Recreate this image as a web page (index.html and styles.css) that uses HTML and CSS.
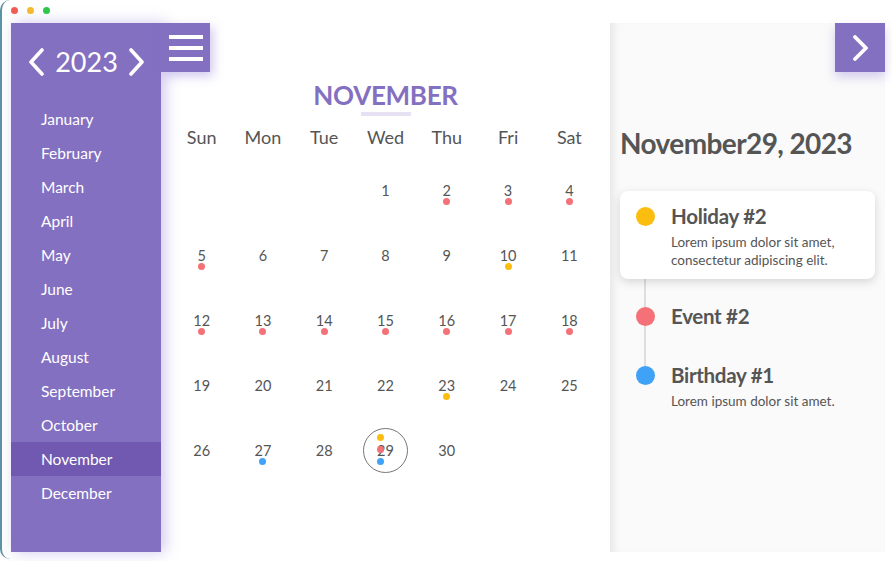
FILE: index.html
```html
<!DOCTYPE html>
<html lang="en">
<head>
<meta charset="utf-8">
<title>Calendar</title>
<link rel="stylesheet" href="styles.css">
</head>
<body>
<div class="window">
  <div class="titlebar">
    <span class="light red"></span><span class="light yellow"></span><span class="light green"></span>
  </div>
  <div class="app">
    <aside class="sidebar">
      <div class="year">
        <svg class="chev" width="18" height="28" viewBox="0 0 18 28"><polyline points="15,2 4,14 15,26" fill="none" stroke="#fff" stroke-width="3.6" stroke-linecap="round" stroke-linejoin="round"/></svg>
        <span class="year-num">2023</span>
        <svg class="chev" width="18" height="28" viewBox="0 0 18 28"><polyline points="3,2 14,14 3,26" fill="none" stroke="#fff" stroke-width="3.6" stroke-linecap="round" stroke-linejoin="round"/></svg>
      </div>
      <ul class="months">
        <li>January</li>
        <li>February</li>
        <li>March</li>
        <li>April</li>
        <li>May</li>
        <li>June</li>
        <li>July</li>
        <li>August</li>
        <li>September</li>
        <li>October</li>
        <li class="active">November</li>
        <li>December</li>
      </ul>
    </aside>

    <main class="calendar">
      <button class="menu-btn" aria-label="menu"><span></span><span></span><span></span></button>
      <h1 class="month-title">NOVEMBER</h1>
      <div class="title-bar"></div>
      <div class="grid heads">
        <div>Sun</div><div>Mon</div><div>Tue</div><div>Wed</div><div>Thu</div><div>Fri</div><div>Sat</div>
      </div>
      <div class="grid days">
        <div class="day"></div><div class="day"></div><div class="day"></div>
        <div class="day"><span class="n">1</span></div>
        <div class="day"><span class="n">2</span><i class="dot r"></i></div>
        <div class="day"><span class="n">3</span><i class="dot r"></i></div>
        <div class="day"><span class="n">4</span><i class="dot r"></i></div>

        <div class="day"><span class="n">5</span><i class="dot r"></i></div>
        <div class="day"><span class="n">6</span></div>
        <div class="day"><span class="n">7</span></div>
        <div class="day"><span class="n">8</span></div>
        <div class="day"><span class="n">9</span></div>
        <div class="day"><span class="n">10</span><i class="dot y"></i></div>
        <div class="day"><span class="n">11</span></div>

        <div class="day"><span class="n">12</span><i class="dot r"></i></div>
        <div class="day"><span class="n">13</span><i class="dot r"></i></div>
        <div class="day"><span class="n">14</span><i class="dot r"></i></div>
        <div class="day"><span class="n">15</span><i class="dot r"></i></div>
        <div class="day"><span class="n">16</span><i class="dot r"></i></div>
        <div class="day"><span class="n">17</span><i class="dot r"></i></div>
        <div class="day"><span class="n">18</span><i class="dot r"></i></div>

        <div class="day"><span class="n">19</span></div>
        <div class="day"><span class="n">20</span></div>
        <div class="day"><span class="n">21</span></div>
        <div class="day"><span class="n">22</span></div>
        <div class="day"><span class="n">23</span><i class="dot y"></i></div>
        <div class="day"><span class="n">24</span></div>
        <div class="day"><span class="n">25</span></div>

        <div class="day"><span class="n">26</span></div>
        <div class="day"><span class="n">27</span><i class="dot b"></i></div>
        <div class="day"><span class="n">28</span></div>
        <div class="day selected"><span class="n">29</span>
          <span class="ring"><i class="dot y"></i><i class="dot r"></i><i class="dot b"></i></span>
        </div>
        <div class="day"><span class="n">30</span></div>
        <div class="day"></div><div class="day"></div>
      </div>
    </main>

    <section class="panel">
      <button class="next-btn" aria-label="next">
        <svg width="18" height="26" viewBox="0 0 18 26"><polyline points="3,2 14,13 3,24" fill="none" stroke="#fff" stroke-width="3.8" stroke-linecap="round" stroke-linejoin="round"/></svg>
      </button>
      <h2 class="date-title">November29, 2023</h2>
      <div class="events">
        <div class="event card">
          <i class="edot y"></i>
          <div class="etext">
            <div class="ename">Holiday #2</div>
            <div class="edesc">Lorem ipsum dolor sit amet, consectetur adipiscing elit.</div>
          </div>
        </div>
        <div class="event short">
          <i class="edot r"></i>
          <div class="etext">
            <div class="ename">Event #2</div>
          </div>
        </div>
        <div class="event">
          <i class="edot b"></i>
          <div class="etext">
            <div class="ename">Birthday #1</div>
            <div class="edesc">Lorem ipsum dolor sit amet.</div>
          </div>
        </div>
      </div>
    </section>
  </div>
</div>
</body>
</html>
```

FILE: styles.css
```css
* { box-sizing: border-box; }
html, body { margin: 0; padding: 0; background: #fff; }
body {
  font-family: Lato, "Liberation Sans", sans-serif;
  color: #555;
  width: 892px;
  height: 561px;
  overflow: hidden;
}
.window {
  height: 559px;
  border-left: 2px solid #5d93a6;
  border-radius: 10px 0 0 10px;
  background: #fff;
}
.titlebar {
  height: 23px;
  display: flex;
  align-items: flex-start;
  gap: 9px;
  padding-left: 9px;
  padding-top: 7px;
}
.light { width: 7px; height: 7px; border-radius: 50%; display: inline-block; }
.light.red { background: #f25c54; }
.light.yellow { background: #f6bd2e; }
.light.green { background: #2ec84a; }

.app {
  display: flex;
  margin-left: 9px;
  width: 874px;
  height: 529px;
}

/* Sidebar */
.sidebar {
  width: 150px;
  flex: none;
  background: #8470c1;
  color: #fff;
  box-shadow: 4px 0 14px rgba(120, 95, 210, 0.35);
  position: relative;
  z-index: 2;
}
.year {
  height: 79px;
  display: flex;
  align-items: center;
  justify-content: center;
  gap: 10px;
  padding-bottom: 2px;
  padding-left: 1px;
}
.year-num { font-size: 27px; line-height: 34px; font-weight: 400; }
.chev { display: block; }
.months { list-style: none; margin: 0; padding: 0; }
.months li {
  height: 34px;
  line-height: 34px;
  padding-left: 30px;
  font-size: 15.5px;
}
.months li.active { background: #7159b1; }

/* Calendar */
.calendar {
  width: 449px;
  flex: none;
  position: relative;
  padding-left: 10px;
  padding-right: 10px;
  background: #fff;
}
.menu-btn {
  position: absolute;
  left: 0;
  top: 0;
  width: 49px;
  height: 49px;
  border: 0;
  padding: 12px 7px 0 8px;
  background: #8470c1;
  display: flex;
  flex-direction: column;
  gap: 7px;
  box-shadow: 3px 4px 10px rgba(120, 95, 210, 0.35);
  z-index: 3;
}
.menu-btn span { display: block; height: 4px; width: 34px; background: #fff; }
.month-title {
  margin: 0;
  padding-top: 55px;
  text-align: center;
  font-size: 26px;
  line-height: 34px;
  font-weight: 700;
  color: #8470c1;
  letter-spacing: -0.3px;
}
.title-bar {
  width: 50px;
  height: 4px;
  background: #e6e2f3;
  margin: 0 auto;
}
.grid {
  display: grid;
  grid-template-columns: repeat(7, 1fr);
}
.heads { height: 37px; align-items: center; text-align: center; font-size: 18px; padding-top: 4px; }
.day {
  height: 65px;
  display: flex;
  flex-direction: column;
  align-items: center;
  padding-top: 28px;
  position: relative;
}
.day .n { font-size: 14.5px; line-height: 20px; color: #555; }
.dot { display: block; width: 7px; height: 7px; border-radius: 50%; }
.day > .dot { margin-top: -3px; }
.dot.r, .edot.r { background: #f47177; }
.dot.y, .edot.y { background: #fbbd0f; }
.dot.b, .edot.b { background: #3fa2f7; }
.ring {
  position: absolute;
  left: 50%;
  top: 15px;
  width: 45px;
  height: 45px;
  margin-left: -22.5px;
  border: 1px solid #777;
  border-radius: 50%;
  display: flex;
  flex-direction: column;
  align-items: flex-start;
  justify-content: center;
  gap: 5px;
  padding-left: 13px;
  padding-bottom: 2px;
}

/* Right panel */
.panel {
  width: 275px;
  flex: none;
  background: #fafafa;
  position: relative;
  padding: 103px 10px 0 10px;
  box-shadow: inset 9px 0 10px -6px rgba(0, 0, 0, 0.09);
}
.next-btn {
  position: absolute;
  right: 0;
  top: 0;
  width: 50px;
  height: 49px;
  border: 0;
  background: #8470c1;
  display: flex;
  align-items: center;
  justify-content: center;
  padding: 0 0 0 2px;
  box-shadow: 0 5px 10px rgba(120, 95, 210, 0.3);
}
.date-title {
  margin: 0;
  font-size: 28px;
  line-height: 34px;
  font-weight: 700;
  color: #555;
  letter-spacing: -0.6px;
}
.events {
  margin-top: 31px;
  display: flex;
  flex-direction: column;
  gap: 12px;
  position: relative;
}
.events::before {
  content: "";
  position: absolute;
  left: 24px;
  width: 2px;
  top: 30px;
  bottom: 52px;
  background: #dedede;
}
.event {
  display: flex;
  align-items: flex-start;
  gap: 16px;
  padding: 12px 16px;
  position: relative;
  z-index: 1;
}
.event.short { padding-bottom: 9px; }
.event.card {
  background: #fff;
  border-radius: 8px;
  box-shadow: 0 3px 10px rgba(0, 0, 0, 0.15);
  height: 88px;
}
.edot { display: block; width: 19px; height: 19px; border-radius: 50%; margin-top: 4px; flex: none; }
.ename { font-size: 20.5px; line-height: 26px; font-weight: 700; color: #555; letter-spacing: -0.3px; }
.edesc { font-size: 13.5px; line-height: 18px; color: #555; margin-top: 4px; }
```
